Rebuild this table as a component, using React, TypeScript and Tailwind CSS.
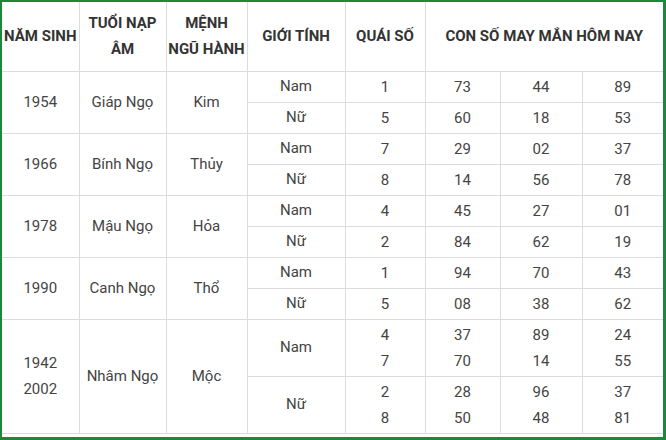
const groups = [
  {
    years: ['1954'],
    tuoi: 'Giáp Ngọ',
    menh: 'Kim',
    rows: [
      { gt: 'Nam', qs: ['1'], nums: [['73', '44', '89']] },
      { gt: 'Nữ', qs: ['5'], nums: [['60', '18', '53']] },
    ],
  },
  {
    years: ['1966'],
    tuoi: 'Bính Ngọ',
    menh: 'Thủy',
    rows: [
      { gt: 'Nam', qs: ['7'], nums: [['29', '02', '37']] },
      { gt: 'Nữ', qs: ['8'], nums: [['14', '56', '78']] },
    ],
  },
  {
    years: ['1978'],
    tuoi: 'Mậu Ngọ',
    menh: 'Hỏa',
    rows: [
      { gt: 'Nam', qs: ['4'], nums: [['45', '27', '01']] },
      { gt: 'Nữ', qs: ['2'], nums: [['84', '62', '19']] },
    ],
  },
  {
    years: ['1990'],
    tuoi: 'Canh Ngọ',
    menh: 'Thổ',
    rows: [
      { gt: 'Nam', qs: ['1'], nums: [['94', '70', '43']] },
      { gt: 'Nữ', qs: ['5'], nums: [['08', '38', '62']] },
    ],
  },
  {
    years: ['1942', '2002'],
    tuoi: 'Nhâm Ngọ',
    menh: 'Mộc',
    rows: [
      {
        gt: 'Nam',
        qs: ['4', '7'],
        nums: [
          ['37', '89', '24'],
          ['70', '14', '55'],
        ],
      },
      {
        gt: 'Nữ',
        qs: ['2', '8'],
        nums: [
          ['28', '96', '37'],
          ['50', '48', '81'],
        ],
      },
    ],
  },
];

const td = 'border border-[#dcdcdc] text-center align-middle p-0';

function Lines({ items }: { items: string[] }) {
  return (
    <div className="flex flex-col items-center leading-[26px]">
      {items.map((t, i) => (
        <span key={i}>{t}</span>
      ))}
    </div>
  );
}

export default function App() {
  return (
    <div
      className="w-[666px] h-[440px] bg-white border-l-2 border-t-2 border-r-[3px] border-b-[3px] border-[#1a8a3a] overflow-hidden"
      style={{ fontFamily: 'Roboto, "Noto Sans", sans-serif' }}
    >
      <table className="w-[661px] table-fixed border-collapse text-[15px] text-[#444]">
        <colgroup>
          <col className="w-[77px]" />
          <col className="w-[87px]" />
          <col className="w-[81px]" />
          <col className="w-[98px]" />
          <col className="w-[80px]" />
          <col className="w-[75px]" />
          <col className="w-[82px]" />
          <col className="w-[81px]" />
        </colgroup>
        <thead>
          <tr className="h-[69px] font-bold text-[#333] leading-[26px]">
            <th className={`${td} border-t-0 border-l-0`}>NĂM SINH</th>
            <th className={`${td} border-t-0`}>
              TUỔI NẠP
              <br />
              ÂM
            </th>
            <th className={`${td} border-t-0`}>
              MỆNH
              <br />
              NGŨ HÀNH
            </th>
            <th className={`${td} border-t-0`}>GIỚI TÍNH</th>
            <th className={`${td} border-t-0`}>QUÁI SỐ</th>
            <th colSpan={3} className={`${td} border-t-0 border-r-0`}>
              CON SỐ MAY MẮN HÔM NAY
            </th>
          </tr>
        </thead>
        <tbody>
          {groups.map((g, gi) =>
            g.rows.map((r, ri) => (
              <tr key={`${gi}-${ri}`} className={g.years.length > 1 ? 'h-[57px]' : 'h-[31px]'}>
                {ri === 0 && (
                  <>
                    <td rowSpan={2} className={`${td} border-l-0`}>
                      <Lines items={g.years} />
                    </td>
                    <td rowSpan={2} className={td}>
                      {g.tuoi}
                    </td>
                    <td rowSpan={2} className={td}>
                      {g.menh}
                    </td>
                  </>
                )}
                <td className={td}>{r.gt}</td>
                <td className={td}>
                  <Lines items={r.qs} />
                </td>
                {[0, 1, 2].map((c) => (
                  <td key={c} className={`${td} ${c === 2 ? 'border-r-0' : ''}`}>
                    <Lines items={r.nums.map((n) => n[c])} />
                  </td>
                ))}
              </tr>
            )),
          )}
        </tbody>
      </table>
    </div>
  );
}
